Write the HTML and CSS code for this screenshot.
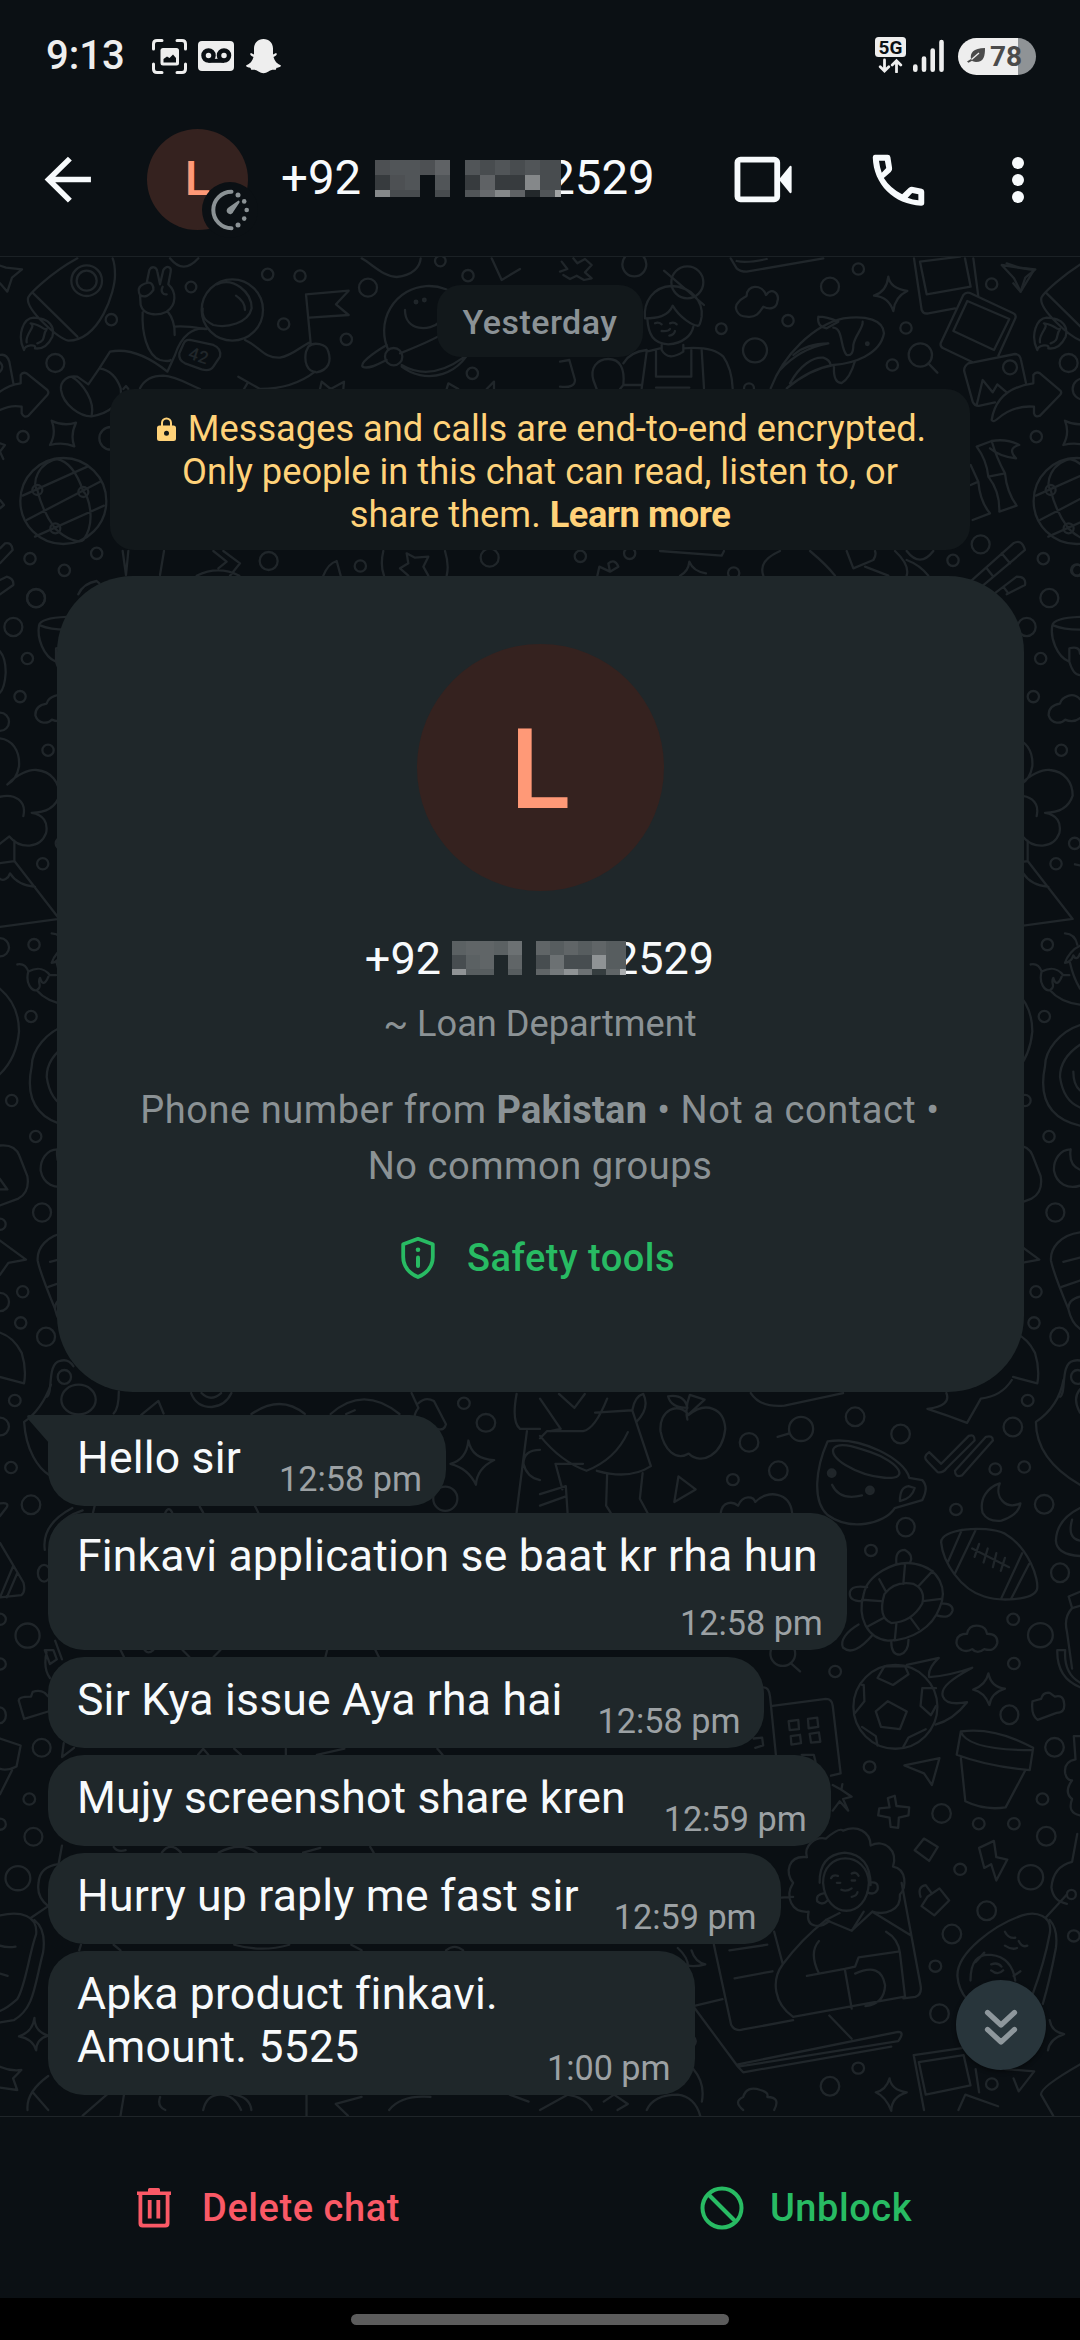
FILE: index.html
```html
<!DOCTYPE html>
<html lang="en">
<head>
<meta charset="utf-8">
<title>Chat</title>
<link rel="stylesheet" href="styles.css">
</head>
<body>
<svg class="defs" aria-hidden="true">
  <symbol id="mosaic" viewBox="0 0 186 37" preserveAspectRatio="none">
    <rect class="mask" x="168" width="18" height="37"/>
    <g fill="#fff" shape-rendering="crispEdges">
      <path opacity=".27" d="M0 0h15v15h-15zM45 0h15v15h-15zM15 15h15v15h-15z"/>
      <path opacity=".29" d="M15 0h30v15h-30zM30 15h15v15h-15zM60 15h15v15h-15zM90 0h15v15h-15zM120 0h15v15h-15zM150 0h15v15h-15zM90 30h15v7h-15zM165 30h15v7h-15z"/>
      <path opacity=".345" d="M60 0h15v15h-15zM105 15h15v15h-15zM135 30h15v7h-15z"/>
      <path opacity=".18" d="M0 15h15v15h-15zM90 15h15v15h-15zM120 15h30v15h-30z"/>
      <path opacity=".25" d="M15 30h30v7h-30zM60 30h15v7h-15zM105 0h15v15h-15zM135 0h15v15h-15zM165 0h21v15h-21zM165 15h21v15h-21z"/>
      <path opacity=".5" d="M0 30h15v7h-15zM150 15h15v15h-15zM120 30h15v7h-15z"/>
      <path opacity=".38" d="M105 30h15v7h-15z"/>
      <path opacity=".1" d="M150 30h15v7h-15z"/>
      <path opacity=".62" d="M180 30h6v7h-6z"/>
    </g>
  </symbol>
</svg>

<div class="status">
  <span class="clock">9:13</span>
  <svg class="st-shot" viewBox="0 0 35 35"><path d="M1.500 10V5Q1.500 1.500 5 1.500H10M25 1.500H30Q33.500 1.500 33.500 5V10M33.500 25V30Q33.500 33.500 30 33.500H25M10 33.500H5Q1.500 33.500 1.500 30V25" fill="none" stroke="#eee" stroke-width="3" stroke-linecap="round"/><rect x="8.500" y="9" width="18.500" height="17.500" rx="2.500" fill="#eee"/><path d="M11.500 23.500V20L15 17.500L17.500 19L21 15.500L24 19V23.500Z" fill="#0b1014"/></svg>
  <svg class="st-vm" viewBox="0 0 36 30"><rect width="36" height="30" rx="4" fill="#eee"/><g fill="none" stroke="#0b1014" stroke-width="4.500"><circle cx="10.500" cy="14.500" r="5"/><circle cx="26" cy="14.500" r="5"/><path d="M10.500 19.800H26" stroke-width="4"/></g></svg>
  <svg class="st-snap" viewBox="0 0 35 35"><path d="M17.500 0C23 0 27 4 27 9.500V15.500L30 14C31.500 14.500 31 16.500 27.500 18C28.500 22 31 25 35 26.500C34.500 28.500 31.500 28.500 30.500 29L29.500 31C27 30.500 24.500 31 22.500 32.500Q17.500 36 12.500 32.500C10.500 31 8 30.500 5.500 31L4.500 29C3.500 28.500 .5 28.500 0 26.500C4 25 6.500 22 7.500 18C4 16.500 3.500 14.500 5 14L8 15.500V9.500C8 4 12 0 17.500 0Z" fill="#eee"/></svg>
  <svg class="st-5g" viewBox="0 0 31 36"><rect width="31" height="20" rx="3.500" fill="#eee"/><text x="15.500" y="16.800" text-anchor="middle" class="g5">5G</text><path d="M9.500 23V33.500M5.200 29.700L9.500 34L13.800 29.700M21.500 35V24.500M17.200 28L21.500 23.700L25.800 28" fill="none" stroke="#eee" stroke-width="2.800" stroke-linecap="round"/></svg>
  <svg class="st-sig" viewBox="0 0 31 34"><path d="M2.300 28.500V31.700M11 20.500V31.700M19.700 12.500V31.700M28.500 4V31.700" stroke="#eee" stroke-width="4.600" stroke-linecap="round"/></svg>
  <div class="battery">
    <svg viewBox="0 0 19 16"><path d="M18 0C18 8 17 14 9 14C7 14 6 13.500 5 12.800L1.500 14.800L0 13.500L4 11C3 5 6 0 18 0Z" fill="#4b4b4b"/><path d="M12 5L4.500 11.500" stroke="#eee" stroke-width="1.300"/></svg>
    <span>78</span>
  </div>
</div>

<header class="bar">
  <svg class="back" viewBox="128 464 142 146" preserveAspectRatio="none"><path d="M264 537H143M203 475L141 537L203 600" fill="none" stroke="#f7fafc" stroke-width="16"/></svg>
  <div class="avatar">L
    <svg class="timer" viewBox="0 0 56 56"><circle cx="28" cy="28" r="28" fill="#0b1014"/><path d="M29.500 9.800A18.200 18.200 0 1 0 29.500 46.200" fill="none" stroke="#8b9295" stroke-width="4" stroke-linecap="round"/><g fill="#8b9295"><circle cx="36" cy="13" r="2.500"/><circle cx="42.200" cy="19.400" r="2.300"/><circle cx="44.700" cy="28" r="2.300"/><circle cx="42.200" cy="36.600" r="2.300"/><circle cx="36" cy="43" r="2.500"/><path d="M36.500 18.500Q38 19 37.500 20.500L31.500 29.500A3.500 3.500 0 1 1 26.500 25.500Z"/></g></svg>
  </div>
  <div class="title"><span>+92</span><svg class="mos"><use href="#mosaic"/></svg><span>2529</span></div>
  <svg class="video" viewBox="560 463 178 148" preserveAspectRatio="none"><rect x="573" y="477" width="116" height="120" rx="9" fill="none" stroke="#f7fafc" stroke-width="17"/><path d="M694 537L726 496Q731 494 731 500V574Q731 580 726 578Z" fill="#f7fafc"/></svg>
  <svg class="phone" viewBox="960 452 165 168" preserveAspectRatio="none"><path fill="#f7fafc" fill-rule="evenodd" d="M974 460H1011Q1018 460 1019 467L1024 500Q1025 507 1020 512L1000 530Q1018 560 1053 579L1072 560Q1078 555 1085 557L1110 562Q1117 564 1117 571V605Q1117 613 1108 613C1030 610 970 550 968 468Q968 460 974 460ZM986 478Q988 497 994 514L1007 500L1003 478ZM1069 589L1082 575L1100 579V597Q1084 596 1069 589Z"/></svg>
  <svg class="dots" viewBox="0 0 12 48"><g fill="#f7fafc"><circle cx="6" cy="7" r="6"/><circle cx="6" cy="24" r="6"/><circle cx="6" cy="41" r="6"/></g></svg>
</header>

<main class="chat">
  <svg class="wallpaper" viewBox="0 257 1080 1859" aria-hidden="true">
    <g id="edge" transform="translate(0 255) scale(.33333)">
      <path d="M-20 25L18 38L66 43L36 68L22 110L0 85M232 10C150 55 85 120 84 130C78 165 175 250 205 257C300 255 345 110 345 60C345 30 340 15 338 10M97 112L232 245M72 285C50 240 70 190 100 188C150 190 165 215 157 245C140 280 120 282 105 280C110 265 75 270 72 285ZM80 262C75 235 110 215 92 205C130 210 125 225 140 222C125 245 140 255 112 265"/>
      <circle cx="260" cy="77" r="46"/><circle cx="260" cy="77" r="30"/><circle cx="166" cy="324" r="27"/><circle cx="69" cy="545" r="17"/><circle cx="90" cy="911" r="17"/><circle cx="193" cy="946" r="17"/>
      <path d="M155 497Q190 515 228 503Q210 540 223 574Q190 560 150 570Q170 535 155 497ZM68 722L262 635M80 795L300 680M105 845L312 752M180 610C110 620 95 690 112 705C125 760 150 800 165 820C200 855 240 865 250 855C290 800 265 720 250 710C240 680 215 620 170 612"/>
      <circle cx="190" cy="738" r="129"/><circle cx="112" cy="705" r="15"/><circle cx="250" cy="711" r="15"/><circle cx="166" cy="820" r="15"/>
    </g>
    <use href="#edge" x="1013.300"/>
    <g transform="translate(0 255) scale(.33333)">
      <circle cx="334" cy="194" r="17"/><circle cx="573" cy="96" r="16"/><circle cx="803" cy="58" r="17"/><circle cx="900" cy="63" r="17"/><circle cx="851" cy="207" r="17"/><circle cx="1104" cy="98" r="27"/><circle cx="1039" cy="253" r="17"/><circle cx="1417" cy="355" r="17"/><circle cx="1404" cy="62" r="17"/><circle cx="1321" cy="18" r="16"/><circle cx="290" cy="895" r="17"/><circle cx="806" cy="918" r="27"/><circle cx="1081" cy="933" r="17"/><circle cx="1469" cy="908" r="27"/><circle cx="108" cy="1030" r="27"/><circle cx="332" cy="550" r="34"/>
      <path d="M420 120C410 100 420 90 440 84L448 45C455 32 470 35 472 50L480 88L490 45C500 30 515 35 512 50L505 88C530 110 530 150 500 170C470 185 430 180 422 150ZM440 84C455 78 462 95 460 105C450 120 435 130 420 120M488 95C480 110 490 120 500 118M428 172C425 230 440 300 480 315C500 320 510 318 512 315M502 168C520 190 525 215 524 240M524 215C560 212 590 218 615 222"/>
      <circle cx="697" cy="165" r="92"/>
      <path d="M650 88C700 65 755 110 755 160C745 205 680 220 640 210C610 195 605 180 608 160M708 122Q735 140 735 165M620 222C580 215 545 240 525 300L502 350C440 300 380 280 330 290L298 340L265 388L232 365C200 360 180 380 183 405C190 450 240 485 275 484C330 475 370 440 362 400C350 365 330 345 298 340M215 365C250 385 285 440 275 482"/>
      <path d="M570 255L640 270Q665 280 660 305L640 335Q630 350 605 343L555 325Q535 315 538 295L550 268Q555 253 570 255Z"/>
      <text class="suit" transform="translate(562 310) rotate(18)">42</text>
      <path d="M420 400C435 370 460 362 490 362C530 365 560 385 600 402M735 255C780 275 790 310 840 308C880 300 900 275 930 262M945 350C900 385 840 402 780 402L715 365M742 385L732 402M370 402L378 393L385 402M932 265L918 118L1046 107L1008 148L1046 180L928 188M925 275C940 260 980 265 985 290C995 320 985 345 950 352C920 350 912 320 918 290Z"/>
      <path d="M1160 270C1110 300 1080 325 1088 335C1105 345 1140 325 1160 315M1200 295C1250 275 1300 255 1330 235M1215 165C1215 230 1290 230 1320 200"/><circle cx="1181" cy="305" r="26"/><path d="M1165 285A135 135 0 1 1 1205 335M1205 330Q1290 380 1390 308"/><circle cx="1248" cy="141" r="4"/><circle cx="1273" cy="135" r="4"/>
      <path d="M510 10Q550 60 595 10M1085 10C1120 30 1150 65 1190 66C1240 60 1260 35 1262 10M1475 10L1505 75L1560 42M0 300Q20 295 28 320L40 385M0 410C20 395 40 388 62 385V360Q68 350 80 355L142 405Q148 413 142 420L85 482Q72 490 65 475V455C40 450 20 455 0 465M0 322Q14 335 0 350M0 565L15 570L0 590L10 612M0 735L12 750L0 760"/>
      <path d="M368 888L378 960L385 888M492 888L480 960M640 888L680 920L655 940M670 888L720 925L690 962M590 962Q655 930 718 962M970 962Q985 925 1010 918L1022 962M1150 888Q1140 930 1152 962M1335 888Q1348 930 1340 962M1220 895L1245 908L1285 905L1270 935L1285 962M1220 895L1225 925L1200 940L1225 962M960 402L965 380L992 402L1032 380L1030 402M1340 402L1345 385L1375 402M1460 402L1482 380V402M0 880L15 865Q35 860 38 885L0 925M0 975L20 965Q42 970 40 990L0 1018M235 1018Q250 985 290 978L298 985"/>
    </g>
    <g transform="translate(560 255) scale(.33333)">
      <circle cx="223" cy="28" r="36"/><circle cx="684" cy="197" r="17"/><circle cx="484" cy="221" r="16"/><circle cx="585" cy="286" r="36"/><circle cx="810" cy="95" r="27"/><circle cx="895" cy="42" r="17"/><circle cx="1038" cy="219" r="17"/><circle cx="997" cy="330" r="17"/><circle cx="1081" cy="300" r="35"/><circle cx="1295" cy="87" r="17"/><circle cx="1350" cy="337" r="21"/><circle cx="1262" cy="868" r="27"/><circle cx="1179" cy="916" r="17"/><circle cx="1550" cy="945" r="17"/><circle cx="61" cy="904" r="17"/><circle cx="209" cy="895" r="17"/><circle cx="521" cy="954" r="17"/><circle cx="567" cy="400" r="15"/><circle cx="382" cy="82" r="48"/><circle cx="922" cy="266" r="4"/><circle cx="1570" cy="402" r="32"/>
      <path d="M0 50L22 42L5 20M40 10L52 25L75 12L95 30L75 52L95 70L72 75L50 62L30 72L10 60M512 10L530 40Q540 50 560 50L790 10M530 18Q560 25 620 12"/>
      <path d="M312 47L432 150M255 190C250 140 280 95 335 93C395 95 430 140 425 185Q420 215 412 212C400 212 360 190 338 152C325 185 290 190 255 190ZM262 190C265 240 280 265 325 268C370 265 395 240 400 215M285 205Q295 200 305 208M330 205Q342 200 350 208M305 228Q325 230 330 222M345 228Q342 240 328 242M305 270V285Q325 320 370 290V270M370 280C430 275 470 285 490 305Q515 340 518 400M245 400L260 290L300 280M288 288V365H394V285M425 285L432 400M288 398H388M190 325Q210 290 260 285M190 390H245M110 402L100 375C90 340 110 312 145 312C180 312 195 340 190 390L180 402M0 320L28 315L45 375Q45 400 0 395"/>
      <path d="M560 185C530 185 520 155 535 142C545 128 555 128 560 122C560 90 605 85 618 120C635 95 660 115 652 140C650 160 630 165 610 155C600 170 590 190 560 185ZM1105 325L1132 353M985 65Q990 100 1042 108Q1005 125 1000 168Q985 125 942 122Q980 110 985 65Z"/>
      <path d="M632 400C670 300 760 210 850 190C920 180 970 195 972 235C960 300 880 325 820 330C760 340 710 375 680 400M775 185Q770 215 800 220L835 200Q800 185 775 185M820 218C850 220 840 280 860 300Q880 305 880 270C885 240 910 220 908 200M660 345Q720 280 805 265Q740 265 700 300M690 385C720 330 760 305 790 308Q810 315 812 330M822 335C820 370 830 385 845 384Q870 370 885 318"/>
      <path d="M1062 10L1085 165Q1090 178 1105 175L1185 160M1080 20L1100 118L1232 95L1215 10M1240 10L1255 125M1080 20L1200 5M1230 114L1360 175Q1370 180 1366 190L1315 302M1210 120Q1218 110 1230 114M1210 120L1142 265Q1140 275 1150 280L1235 320M1222 138L1348 192L1302 285L1180 228ZM1225 325L1365 297Q1380 298 1383 315L1398 385M1225 325Q1210 335 1213 350L1238 440Q1245 455 1260 452L1305 442M1250 450L1268 375L1298 412L1312 388L1340 412"/>
      <path d="M1295 495Q1310 400 1420 385V360Q1428 348 1440 355L1502 408Q1506 414 1500 420L1440 482Q1425 488 1422 475V455Q1360 450 1312 492Q1300 503 1295 495ZM1325 30L1422 45L1382 110L1362 70Z"/>
      <path d="M1250 575L1295 558Q1310 610 1335 655Q1340 710 1370 752L1318 770Q1320 710 1285 665Q1280 615 1250 575ZM1285 665L1335 655M1232 630L1255 680Q1260 740 1290 775L1238 795M1232 690L1255 680M1295 558Q1340 550 1378 570Q1340 580 1368 610Q1320 605 1290 580"/>
      <path d="M1225 985L1360 865Q1385 850 1395 885L1265 995M1280 940L1300 965M1325 895L1350 925M1300 1018L1370 965Q1400 965 1395 990L1340 1018M1330 995L1345 1015M300 888L485 902L492 888M112 962L118 935L150 950L175 935Q165 910 145 925L150 950M360 962Q385 950 388 920Q400 950 438 955M660 888C610 910 600 935 610 962M750 888Q800 930 825 962M860 888L880 940L940 915Q950 900 945 888M915 935L985 962M1005 888Q1050 930 1040 962M1040 888Q1080 940 1120 888M1040 915Q1080 930 1105 962"/>
    </g>
    <g id="side" transform="translate(950 560) scale(.33333 .53571)">
      <ellipse cx="298" cy="71" rx="27" ry="17"/><ellipse cx="230" cy="125" rx="27" ry="17"/><ellipse cx="272" cy="184" rx="17" ry="10.500"/><ellipse cx="250" cy="255" rx="17" ry="10.500"/><ellipse cx="334" cy="355" rx="17" ry="10.500"/><ellipse cx="374" cy="529" rx="17" ry="10.500"/><ellipse cx="318" cy="567" rx="17" ry="10.500"/><ellipse cx="292" cy="718" rx="17" ry="10.500"/><ellipse cx="283" cy="852" rx="17" ry="10.500"/><ellipse cx="225" cy="1009" rx="17" ry="10.500"/><ellipse cx="297" cy="1076" rx="17" ry="10.500"/><ellipse cx="316" cy="1218" rx="27" ry="17"/><ellipse cx="258" cy="1366" rx="17" ry="10.500"/><ellipse cx="252" cy="1424" rx="17" ry="10.500"/><ellipse cx="328" cy="1450" rx="27" ry="17"/><ellipse cx="383" cy="1525" rx="20" ry="13"/><ellipse cx="190" cy="302" rx="27" ry="17"/><ellipse cx="190" cy="723" rx="27" ry="17"/><ellipse cx="190" cy="1385" rx="27" ry="17"/><ellipse cx="190" cy="1240" rx="17" ry="10.500"/>
      <path d="M390 106C350 107 310 110 307 122C300 145 320 180 358 190M310 122Q340 130 390 130M358 190V165Q390 160 390 175M358 190Q370 215 390 215M390 260C370 245 335 255 330 268C310 270 295 275 296 290C305 308 335 305 345 298Q370 305 390 295"/>
      <path d="M189 333C225 335 250 355 247 385Q240 410 212 419C240 400 280 390 300 392C345 395 368 415 368 440C355 465 320 472 285 472C320 475 335 490 328 510C310 540 250 540 218 516L189 530M189 442C235 435 270 450 260 478M233 524V562L368 670L189 685M189 566L233 562M189 595C200 600 215 595 220 585C235 600 260 608 295 610M189 170Q207 182 207 210Q204 240 189 248"/>
      <path d="M242 755Q265 752 275 768C300 760 320 760 340 775L358 775M275 768C265 790 285 805 300 803C320 795 300 790 310 780Q320 800 335 778M300 803Q330 825 390 830M345 697Q375 698 382 718M390 720C370 725 350 740 345 752Q365 750 370 738Q380 750 390 735M360 752Q370 780 390 800M189 800Q247 830 247 880Q240 930 189 960"/>
      <path d="M390 868C330 880 285 915 285 945C270 990 280 1040 390 1056M390 905Q330 930 330 965Q340 1010 390 1022M370 955Q370 980 390 990M189 1093Q235 1090 248 1112L272 1150Q280 1180 245 1192L189 1205M189 1155L212 1175L189 1175M362 1100C330 1100 310 1120 312 1140C320 1165 355 1175 390 1168M362 1100Q355 1130 390 1138M189 1270L268 1306L215 1312L189 1335"/>
      <path d="M390 1255C330 1260 300 1285 303 1308Q310 1330 355 1398M335 1357L390 1345M340 1310L390 1302M390 1375Q355 1380 355 1398Q365 1425 390 1435M189 1442Q230 1450 255 1480Q270 1510 262 1537L189 1525M330 1562C350 1555 330 1500 370 1495Q395 1490 410 1505M375 568L390 570"/>
    </g>
    <use href="#side" x="-1013.300"/>
    <g transform="translate(0 1380) scale(.34439 .46557)">
      <ellipse cx="43" cy="44" rx="17" ry="12"/><ellipse cx="228" cy="42" rx="50" ry="32"/><ellipse cx="0" cy="100" rx="26" ry="19"/><ellipse cx="32" cy="188" rx="17" ry="12"/><ellipse cx="90" cy="268" rx="27" ry="20"/><ellipse cx="80" cy="549" rx="35" ry="26"/><ellipse cx="128" cy="415" rx="18" ry="18"/><ellipse cx="0" cy="514" rx="17" ry="12"/><ellipse cx="0" cy="610" rx="17" ry="12"/><ellipse cx="0" cy="720" rx="17" ry="17"/><ellipse cx="121" cy="790" rx="26" ry="19"/><ellipse cx="85" cy="900" rx="17" ry="12"/><ellipse cx="0" cy="954" rx="17" ry="12"/><ellipse cx="97" cy="981" rx="26" ry="19"/><ellipse cx="52" cy="1070" rx="36" ry="26"/><ellipse cx="1347" cy="50" rx="17" ry="12"/><ellipse cx="1411" cy="92" rx="27" ry="19"/><ellipse cx="1293" cy="255" rx="35" ry="26"/>
      <path d="M0 265Q30 262 18 275L0 292M0 350L68 435Q75 455 62 462L0 467M0 467L38 400M20 467L50 415M70 90C75 150 110 190 145 205M148 10Q120 65 70 90M345 25Q345 60 330 72M410 75L460 45L475 72M555 28Q570 58 615 58Q655 55 672 28M585 28Q612 48 642 28M730 73Q815 30 885 73M960 73Q1055 10 1160 73M1005 73L1030 65M1195 28L1215 60Q1200 75 1205 85M1215 50Q1235 35 1260 45L1295 95Q1290 110 1270 105M1500 30Q1485 90 1510 105H1568M1530 110L1500 285M1568 150Q1520 150 1520 180Q1530 210 1568 215M1360 130Q1370 170 1435 172Q1385 190 1382 225Q1360 190 1308 180Q1355 170 1360 130ZM130 365Q120 310 210 275M150 345Q160 300 240 280"/>
      <path d="M160 560L180 600M130 580H155L165 600L145 610ZM145 640Q125 620 135 585M55 690Q50 680 90 680L95 670Q115 665 130 672L140 680M55 690L70 728L140 712M0 770L60 785L48 830Q20 840 0 835M35 838L0 890M215 790L180 810L185 780M180 1000L170 1040Q115 1045 112 1080Q105 1110 140 1130L90 1155M0 1150C60 1140 110 1150 105 1190C85 1230 75 1300 50 1330Q20 1350 0 1355M100 1160Q135 1180 125 1230C100 1300 100 1350 40 1375L0 1380M0 1215Q20 1220 45 1217M0 1275L22 1280M100 1370Q100 1400 140 1408Q105 1415 105 1440Q95 1415 55 1410Q95 1400 100 1370ZM0 1475Q30 1485 62 1482L38 1500L50 1525L0 1520M80 1568Q75 1530 140 1495M95 1530L140 1568M465 1540Q455 1560 480 1568M590 1568Q600 1535 640 1535Q680 1535 700 1568M680 1535Q725 1540 730 1568M240 1580L310 1535M350 1580L360 1535M890 1535L890 1580M975 1555L1050 1540M975 1555L1010 1580M1130 1568Q1165 1535 1250 1540M1480 1535L1535 1550"/>
      <path d="M270 285L275 270M480 285Q490 270 500 285M590 285L580 272M740 270L750 285M350 580L360 595M420 580Q430 590 445 580M530 580L550 595M620 595L640 580M950 580L945 595M1090 580L1100 595M575 805L590 792L605 805M680 792L700 805M830 792V805M920 805L1000 792M1270 792L1285 805M330 1003Q340 1015 365 1010M470 1015Q495 990 525 1015M635 1015Q700 990 745 1015M880 1015L930 1005M1075 1003L1085 1015M230 1225L235 1213M330 1213L350 1225M680 1213Q760 1230 840 1213M1020 1213L1050 1225M1295 1225Q1320 1210 1345 1225"/>
    </g>
    <g transform="translate(540 1380) scale(.34439 .46557)">
      <ellipse cx="607" cy="134" rx="27" ry="20"/><ellipse cx="758" cy="105" rx="35" ry="26"/><ellipse cx="692" cy="195" rx="27" ry="20"/><ellipse cx="560" cy="214" rx="17" ry="12"/><ellipse cx="915" cy="79" rx="27" ry="20"/><ellipse cx="1047" cy="116" rx="27" ry="20"/><ellipse cx="1416" cy="44" rx="17" ry="12"/><ellipse cx="1373" cy="101" rx="27" ry="20"/><ellipse cx="1322" cy="191" rx="17" ry="12"/><ellipse cx="1406" cy="187" rx="17" ry="12"/><ellipse cx="1208" cy="278" rx="17" ry="12"/><ellipse cx="1464" cy="267" rx="27" ry="20"/><ellipse cx="1062" cy="316" rx="26" ry="20"/><ellipse cx="961" cy="366" rx="17" ry="12"/><ellipse cx="1510" cy="414" rx="26" ry="20"/><ellipse cx="1374" cy="514" rx="17" ry="12"/><ellipse cx="1453" cy="548" rx="36" ry="26"/><ellipse cx="1376" cy="609" rx="17" ry="12"/><ellipse cx="857" cy="626" rx="17" ry="12"/><ellipse cx="1363" cy="719" rx="26" ry="20"/><ellipse cx="1494" cy="789" rx="27" ry="20"/><ellipse cx="957" cy="831" rx="17" ry="12"/><ellipse cx="1166" cy="931" rx="27" ry="20"/><ellipse cx="1459" cy="900" rx="17" ry="12"/><ellipse cx="1274" cy="953" rx="17" ry="12"/><ellipse cx="1376" cy="953" rx="17" ry="12"/><ellipse cx="1470" cy="980" rx="27" ry="20"/><ellipse cx="1220" cy="1051" rx="17" ry="12"/><ellipse cx="1425" cy="1068" rx="36" ry="26"/><ellipse cx="1297" cy="1140" rx="27" ry="20"/><ellipse cx="1196" cy="1190" rx="27" ry="20"/><ellipse cx="1550" cy="1194" rx="17" ry="12"/><ellipse cx="1148" cy="1259" rx="17" ry="12"/><ellipse cx="1160" cy="1361" rx="27" ry="20"/><ellipse cx="924" cy="1478" rx="17" ry="12"/><ellipse cx="842" cy="1517" rx="27" ry="20"/><ellipse cx="1312" cy="1512" rx="17" ry="12"/><ellipse cx="705" cy="588" rx="36" ry="26"/><ellipse cx="1543" cy="1105" rx="13" ry="10"/>
      <ellipse class="dot" cx="847" cy="200" rx="11" ry="8"/><ellipse class="dot" cx="958" cy="237" rx="11" ry="8"/>
      <path d="M722 115L690 122M728 608L755 626M432 75C400 45 345 65 350 110C360 150 395 175 432 158C470 185 530 160 538 105C535 60 480 45 432 75ZM428 85Q420 60 435 32L478 42L430 75M428 60Q380 60 372 35Q420 30 428 60M0 125L20 110H125Q160 105 195 40M0 40L60 105L30 110M130 30L100 60L55 30M160 70L268 65L322 185Q260 215 165 195M268 65Q275 35 300 30Q320 60 280 90M0 120Q60 175 135 195Q220 170 255 112M195 200L192 270L205 285M298 200L290 255L312 285M45 180L65 235M45 180H125M0 245L75 228L80 285M0 270L75 250"/>
      <path d="M612 28Q640 60 710 55L880 28M1180 28Q1195 55 1125 62Q1180 75 1240 92Q1265 60 1280 40Q1340 35 1370 0M1520 0C1510 40 1480 70 1440 90Q1440 170 1568 225M1568 20Q1545 40 1568 70M402 207L452 235L390 262ZM525 285C530 260 560 260 575 270C590 245 620 250 625 262C660 235 725 240 732 285"/>
      <path d="M835 132C800 190 790 260 835 290C900 325 1000 310 1030 275L1110 258Q1130 230 1110 215L1072 210C1060 170 930 120 835 132ZM855 145C830 165 920 205 1000 210C1080 215 1040 175 960 155C900 140 870 135 855 145ZM1045 260Q1045 230 1070 228L1088 232Q1080 255 1045 260ZM848 225Q870 260 935 248M1130 155Q1110 165 1125 175L1155 198Q1170 200 1180 190L1262 130Q1262 115 1245 120L1165 180ZM1295 122Q1315 118 1315 130L1225 205Q1205 210 1205 195ZM1335 222C1300 230 1275 255 1285 285Q1300 305 1340 302Q1390 290 1395 265C1350 280 1320 250 1335 222Z"/>
      <path d="M1165 350C1160 320 1290 310 1350 330C1420 360 1450 430 1443 450C1430 475 1330 475 1290 465C1220 450 1170 390 1165 350ZM1225 322L1185 390M1265 322L1205 415M1400 372L1340 468M1420 395L1368 470M1255 362L1362 402M1275 352L1262 380M1300 362L1288 392M1325 372L1315 402M1350 382L1338 410"/>
      <path d="M940 460C950 420 1030 385 1090 395C1160 405 1185 450 1160 490C1140 530 1080 560 1010 560C950 555 920 510 940 460ZM1000 460Q1030 430 1085 438Q1120 450 1110 480Q1080 520 1020 522Q980 510 1000 460ZM1055 438L1060 395M1100 442L1140 410M1112 475L1165 470M1075 510L1100 535M1035 522L1030 560M1000 510L950 530M990 475L935 472M1005 455L985 428M1035 395Q1030 365 1060 365Q1085 375 1075 392M935 475Q895 475 900 455Q905 440 950 445M1165 480Q1200 480 1198 495Q1190 515 1150 505M1020 562Q1020 590 1045 590Q1070 585 1070 558M925 525C890 540 870 560 880 575Q910 595 965 548M1225 580C1200 570 1205 545 1240 545Q1245 525 1275 528Q1295 530 1298 545Q1330 545 1328 565Q1320 585 1290 578Q1270 590 1255 578Q1240 585 1225 580Z"/>
      <ellipse cx="1032" cy="702" rx="122" ry="90"/>
      <path d="M1010 690L1065 712L1045 750L990 745L975 712ZM980 640L1000 615H1060L1070 632L1025 655ZM1110 662H1150M1110 662L1105 700L1135 720L1150 700M935 655H940L942 690L915 715M935 745L975 765L980 785M1055 788L1070 768L1120 750M1065 612Q1110 605 1158 597Q1125 620 1130 638Q1190 635 1255 618C1200 640 1160 660 1170 680Q1180 700 1240 692Q1200 730 1148 740M1302 630Q1310 660 1350 663Q1310 672 1305 698Q1290 670 1258 665Q1295 655 1302 630ZM1430 690L1455 685Q1460 670 1480 672L1495 680Q1520 675 1522 695Q1525 715 1500 715L1445 730Q1425 720 1430 690Z"/>
      <path d="M1222 755L1210 805Q1300 830 1422 838L1432 790Q1320 745 1222 755ZM1222 755Q1240 795 1430 795M1222 812L1235 905Q1290 925 1352 918L1408 840M650 660Q665 660 668 680L685 805M675 700L830 685Q848 685 850 700L873 845L845 850M722 733L750 730L752 750L725 752ZM778 728L805 725L808 745L780 748ZM728 765L755 762L758 780L730 783ZM783 760L810 757L814 777L787 779ZM620 770L645 768L648 785L625 790M760 805H795L800 820"/>
      <path d="M850 870L875 880L878 868M875 880L905 895L880 900L895 925L870 905L850 925M1010 898L1030 893L1035 915L1072 918L1070 935L1042 940L1040 962L1018 960L1015 940L982 935L985 920L1015 918ZM1058 828L1160 812L1138 870L1115 845ZM1115 985L1155 1003L1130 1033L1088 1010ZM1275 1005L1318 990L1325 1025L1357 1030L1325 1075L1310 1040L1290 1048ZM1125 1110L1160 1092L1188 1118L1145 1150L1108 1130ZM1105 1110Q1095 1088 1120 1085L1135 1100"/>
      <path d="M812 1080Q810 1020 885 1015Q960 1020 960 1085M822 1080C822 1010 950 1010 955 1080C950 1160 830 1160 822 1080M845 1070Q850 1062 865 1065M862 1080H872M905 1060Q918 1055 925 1065M905 1075H915M875 1095Q890 1100 905 1092M905 1110Q920 1108 922 1100M825 1102Q800 1105 805 1120Q820 1130 835 1118M955 1080Q985 1075 980 1095Q970 1108 950 1100M775 1025C765 1000 800 980 830 985Q870 960 880 968C920 955 960 970 960 1000C1000 985 1040 1010 1025 1045C1065 1050 1065 1090 1045 1105C1050 1140 1000 1150 965 1142M775 1025C720 1020 710 1060 735 1080C710 1110 730 1145 780 1142C770 1175 810 1180 840 1162M735 1110L700 1112"/>
      <path d="M870 1145L830 1160Q760 1200 705 1255C670 1290 680 1340 735 1368L1055 1325M830 1160L905 1183L940 1142M905 1183L965 1142L1075 1192M1050 1080L1105 1300Q1110 1320 1090 1325L1055 1328M1005 1185Q1040 1200 1045 1230L1060 1325M810 1205Q780 1230 810 1275M775 1280L885 1265L915 1260L925 1240L1040 1228M885 1265L905 1350M915 1275Q990 1250 1002 1300Q1000 1340 945 1345M680 1185L705 1255M505 1213L555 1385Q565 1400 590 1395L735 1375M550 1225L660 1213M565 1285L675 1270M445 1345L530 1330M445 1345L575 1475L1040 1420Q1060 1400 1040 1400L575 1470M840 1365L905 1415M575 1475L590 1487L1020 1432"/>
      <path d="M400 1220Q430 1240 430 1260M440 1225Q450 1250 480 1255Q430 1265 415 1250M445 1410Q460 1420 445 1432M445 1480Q480 1510 470 1550M310 1568Q330 1535 400 1535Q450 1540 465 1580M0 1568L80 1535Q130 1540 150 1568M185 1550L215 1535L255 1555L225 1568M590 1568Q560 1550 590 1540Q600 1515 640 1525Q665 1530 660 1540Q700 1540 680 1568M1015 1500Q1020 1525 1065 1530Q1020 1540 1020 1570Q1005 1540 975 1530Q1005 1525 1015 1500M1085 1450L1225 1435M1085 1450L1115 1568M1100 1465L1230 1450L1250 1515L1120 1535ZM1265 1480L1275 1530M1215 1568L1235 1535L1330 1560M1350 1480L1435 1485L1390 1528L1375 1500M1568 1470Q1450 1520 1455 1535L1490 1580M1480 1375Q1485 1400 1522 1405Q1480 1415 1475 1440"/>
      <path d="M1400 1150C1440 1140 1490 1150 1480 1190C1465 1250 1440 1300 1430 1320M1400 1150C1320 1170 1210 1230 1212 1280Q1215 1310 1240 1330M1480 1160Q1505 1180 1498 1220Q1480 1290 1460 1340M1350 1185Q1360 1200 1380 1198M1390 1205Q1400 1220 1415 1215M1350 1215Q1370 1225 1385 1220M1250 1290Q1250 1230 1310 1235Q1370 1240 1380 1290M1310 1255Q1330 1250 1340 1260M1310 1268Q1330 1280 1345 1268M1265 1250L1290 1230M1375 1280L1395 1270M1468 1155L1530 1105M1560 975L1545 1035Q1490 1045 1485 1090Q1490 1120 1530 1125M1568 275Q1500 300 1498 345Q1500 375 1568 378M1545 300Q1530 340 1568 345M1568 455L1535 465L1545 490L1568 485M1545 490Q1520 510 1530 540L1545 620M1502 580H1525Q1520 630 1568 650M1502 580Q1500 640 1568 660M1568 765H1550L1555 815Q1520 820 1525 845Q1530 860 1545 860Q1520 885 1545 900Q1530 930 1568 935"/>
    </g>
  </svg>

  <div class="day">Yesterday</div>
  <div class="notice"><svg class="lock" viewBox="0 0 19 24"><path fill="#ffd279" fill-rule="evenodd" d="M4 8.500V6A5.500 5.500 0 0 1 15 6V8.500H16.500Q19 8.500 19 11V21.500Q19 24 16.500 24H2.500Q0 24 0 21.500V11Q0 8.500 2.500 8.500ZM6 8.500H13V6A3.500 3.500 0 0 0 6 6ZM9.500 13.700A2.500 2.500 0 1 0 9.500 18.700A2.500 2.500 0 1 0 9.500 13.700Z"/></svg>Messages and calls are end-to-end encrypted.<br>Only people in this chat can read, listen to, or<br>share them. <b>Learn more</b></div>

  <section class="card">
    <div class="card-avatar">L</div>
    <div class="card-number"><span>+92</span><svg class="mos"><use href="#mosaic"/></svg><span>2529</span></div>
    <div class="card-name">~ Loan Department</div>
    <div class="card-info">Phone number from <b>Pakistan</b> • Not a contact •<br>No common groups</div>
    <div class="safety"><svg viewBox="0 0 36 44"><path d="M18 2.800L32.800 8.200V21C32.800 30.500 26.500 37.500 18 41C9.500 37.500 3.200 30.500 3.200 21V8.200Z" fill="none" stroke="#28bb63" stroke-width="3.800" stroke-linejoin="round"/><circle cx="18" cy="13.800" r="2.300" fill="#28bb63"/><path d="M18 21.500V30" stroke="#28bb63" stroke-width="4" stroke-linecap="round"/></svg><span>Safety tools</span></div>
  </section>

  <div class="messages">
    <div class="bubble first"><svg class="tail" viewBox="0 0 22 28"><path d="M2 0H22V28L1 4Q-1 0 2 0Z" fill="#1f272a"/></svg><p>Hello sir</p><time>12:58 pm</time></div>
    <div class="bubble stacked"><p>Finkavi application se baat kr rha hun</p><time>12:58 pm</time></div>
    <div class="bubble snug"><p>Sir Kya issue Aya rha hai</p><time>12:58 pm</time></div>
    <div class="bubble"><p>Mujy screenshot share kren</p><time>12:59 pm</time></div>
    <div class="bubble snug"><p>Hurry up raply me fast sir</p><time>12:59 pm</time></div>
    <div class="bubble tall"><p>Apka product finkavi.<br>Amount. 5525</p><time>1:00 pm</time></div>
  </div>

  <div class="jump"><svg viewBox="0 0 34 40"><path d="M3.500 4.500L17 17L30.500 4.500M3.500 21.500L17 34L30.500 21.500" fill="none" stroke="#8e979c" stroke-width="5.200" stroke-linecap="round" stroke-linejoin="round"/></svg></div>
</main>

<footer class="actions">
  <div class="act del"><svg viewBox="0 0 34 40"><path d="M0 3.500H11V1.500Q11 0 12.500 0H21.500Q23 0 23 1.500V3.500H34V7H32.500V35.500Q32.500 39.500 28.500 39.500H5.500Q1.500 39.500 1.500 35.500V7H0ZM5.300 7V34.500Q5.300 35.800 6.600 35.800H27.400Q28.700 35.800 28.700 34.500V7Z" fill="#fa5966" fill-rule="evenodd"/><path d="M12.700 12V30.500M21.300 12V30.500" stroke="#fa5966" stroke-width="3.800"/></svg><span>Delete chat</span></div>
  <div class="act unb"><svg viewBox="0 0 44 44"><circle cx="22" cy="22" r="19.500" fill="none" stroke="#28bb63" stroke-width="4"/><path d="M8.500 8.500L35.500 35.500" stroke="#28bb63" stroke-width="4"/></svg><span>Unblock</span></div>
</footer>
<div class="nav"><i></i></div>
</body>
</html>
```
FILE: styles.css
```css
:root{--bg:#0b1014;--card:#1f272a;--green:#28bb63}
*{box-sizing:border-box}
body{margin:0;width:1080px;height:2340px;background:var(--bg);color:#f7fafc;font-family:Roboto,sans-serif;display:flex;flex-direction:column;overflow:hidden}
svg{display:block;flex:none}
.defs{position:absolute;width:0;height:0}
p{margin:0}

.status{height:112px;padding:0 44px 0 46px;display:flex;align-items:center}
.clock{font-weight:500;font-size:40px;line-height:48px;color:#eee}
.st-shot{width:35px;height:35px;margin-left:27px;margin-top:1px}
.st-vm{width:36px;height:30px;margin-left:11px}
.st-snap{width:35px;height:35px;margin-left:12px}
.st-5g{width:31px;height:36px;margin-left:auto;margin-top:-2px}
.g5{font:700 19px Roboto,sans-serif;fill:#0b1014}
.st-sig{width:31px;height:34px;margin-left:7px;margin-top:-2px}
.battery{width:78px;height:37px;margin-left:14px;border-radius:19px;background:linear-gradient(90deg,#eee 60px,#8f9396 60px);display:flex;align-items:center;padding-left:9px;gap:4px;color:#4b4b4b;font-weight:700;font-size:28px;line-height:37px}
.battery svg{width:19px;height:16px}

.bar{height:145px;padding:0 56px 9px 44px;border-bottom:1px solid #1b2125;display:flex;align-items:center}
.back{width:49px;height:49px}
.avatar{position:relative;width:101px;height:101px;margin-left:54px;border-radius:50%;background:#35221f;color:#ff9977;font-weight:500;font-size:47.400px;line-height:101px;text-align:center}
.timer{position:absolute;left:55px;top:53px;width:56px;height:56px}
.title{display:flex;align-items:center;margin-left:33px;margin-right:auto;padding-bottom:4px;font-size:47.400px;line-height:60px;--mask:#0b1014}
.mos{position:relative}
.mask{fill:var(--mask)}
.title .mos{width:186px;height:37px;margin:1px -13px 0 14px}
.video{width:61px;height:49px}
.phone{width:57px;height:56px;margin-left:76px}
.dots{width:12px;height:48px;margin-left:85px}

.chat{position:relative;height:1859px;display:flex;flex-direction:column;align-items:center;background:#0a0f13}
.wallpaper{position:absolute;left:0;top:0;width:1080px;height:1859px;fill:none;stroke:#20262a;stroke-width:2.300}
.wallpaper path,.wallpaper circle,.wallpaper ellipse{vector-effect:non-scaling-stroke;stroke-linecap:round;stroke-linejoin:round}
.wallpaper .dot{fill:#20262a}
.suit{font:500 52px Roboto,sans-serif;fill:#20262a;stroke:none}
.day,.notice,.card,.messages{position:relative}
.day{margin-top:28px;width:206px;height:72px;border-radius:24px;background:#12181b;color:#8b9296;font-weight:500;font-size:34px;line-height:75px;letter-spacing:.5px;text-align:center}
.notice{margin-top:32px;width:860px;height:161px;padding-top:18px;border-radius:24px;background:#12181b;color:#ffd279;font-size:36.250px;line-height:43px;text-align:center;white-space:nowrap}
.notice b{letter-spacing:-.5px}
.lock{display:inline-block;width:19px;height:24px;margin:0 12px 0 3px}
.card{margin-top:26px;width:967px;height:816px;border-radius:76px;background:var(--card);display:flex;flex-direction:column;align-items:center;color:#8b9295}
.card-avatar{margin-top:68px;width:247px;height:247px;border-radius:50%;background:#35221f;color:#ff9977;font-weight:500;font-size:111px;line-height:252px;text-align:center}
.card-number{margin-top:38px;display:flex;align-items:center;padding-right:1px;color:#f7fafc;font-size:45px;line-height:60px;--mask:#1f272a}
.card-number .mos{width:174px;height:34px;margin:0 -13px 2px 11px}
.card-name{margin-top:11px;font-size:36.200px;line-height:48px}
.card-info{margin-top:34px;font-size:38px;line-height:56px;letter-spacing:.55px;text-align:center;white-space:nowrap}
.card-info b{letter-spacing:.2px}
.safety{margin-top:39px;display:flex;align-items:center;gap:31px;padding-right:5px;color:var(--green);font-weight:500;font-size:38px;line-height:50px;letter-spacing:.5px}
.safety svg{width:36px;height:44px}

.messages{position:absolute;top:1158px;left:0;padding-left:48px;display:flex;flex-direction:column;align-items:flex-start;gap:7px}
.bubble{position:relative;min-height:91px;padding:17px 24px 7px 29px;border-radius:36px;background:var(--card);display:flex;gap:38px;align-items:flex-start;font-size:44.500px;line-height:53px;letter-spacing:.2px}
.bubble p{white-space:nowrap}
.bubble time{align-self:flex-end;color:#9ca1a4;font-size:34.200px;line-height:40px;letter-spacing:0}
.first{border-top-left-radius:0}
.tail{position:absolute;left:-21px;top:0;width:22px;height:28px}
.snug{gap:35px}
.stacked{flex-direction:column;justify-content:space-between;gap:0;height:137px}
.stacked p{padding-right:5px}
.tall{height:144px;gap:49px}
.jump{position:absolute;left:956px;top:1723px;width:90px;height:90px;border-radius:50%;background:#28353b;display:flex;align-items:center;justify-content:center;box-shadow:0 2px 4px rgba(0,0,0,.4)}
.jump svg{width:34px;height:40px;margin-top:6px}

.actions{height:182px;border-top:1px solid #1f2529;display:grid;grid-template-columns:1fr 1fr}
.act{display:flex;align-items:center;justify-content:center;font-weight:500;font-size:38px;line-height:50px;letter-spacing:.55px}
.del{color:#fa5966;gap:31px;padding-right:3px}
.del svg{width:34px;height:40px}
.unb{color:var(--green);gap:26px;padding-right:8px}
.unb svg{width:44px;height:44px}
.nav{flex:1;background:#000;display:flex;justify-content:center;padding-top:16px}
.nav i{width:378px;height:11px;border-radius:6px;background:#5c5c5c}
```
